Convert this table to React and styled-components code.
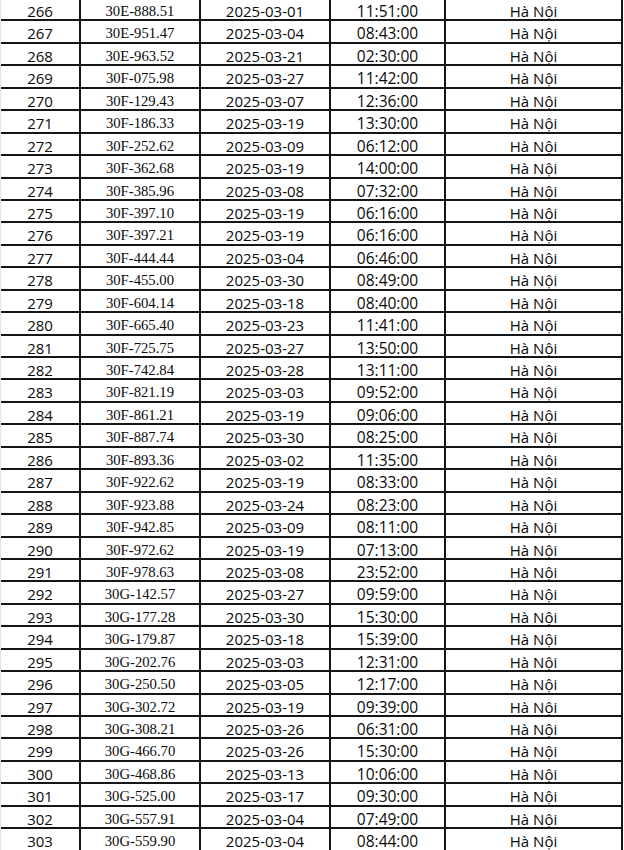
import React from 'react';
import styled, { createGlobalStyle } from 'styled-components';

const GlobalStyle = createGlobalStyle`
  html, body {
    margin: 0;
    padding: 0;
    background: #ffffff;
    overflow: hidden;
  }
`;

const rows = [
  ['266', '30E-888.51', '2025-03-01', '11:51:00'],
  ['267', '30E-951.47', '2025-03-04', '08:43:00'],
  ['268', '30E-963.52', '2025-03-21', '02:30:00'],
  ['269', '30F-075.98', '2025-03-27', '11:42:00'],
  ['270', '30F-129.43', '2025-03-07', '12:36:00'],
  ['271', '30F-186.33', '2025-03-19', '13:30:00'],
  ['272', '30F-252.62', '2025-03-09', '06:12:00'],
  ['273', '30F-362.68', '2025-03-19', '14:00:00'],
  ['274', '30F-385.96', '2025-03-08', '07:32:00'],
  ['275', '30F-397.10', '2025-03-19', '06:16:00'],
  ['276', '30F-397.21', '2025-03-19', '06:16:00'],
  ['277', '30F-444.44', '2025-03-04', '06:46:00'],
  ['278', '30F-455.00', '2025-03-30', '08:49:00'],
  ['279', '30F-604.14', '2025-03-18', '08:40:00'],
  ['280', '30F-665.40', '2025-03-23', '11:41:00'],
  ['281', '30F-725.75', '2025-03-27', '13:50:00'],
  ['282', '30F-742.84', '2025-03-28', '13:11:00'],
  ['283', '30F-821.19', '2025-03-03', '09:52:00'],
  ['284', '30F-861.21', '2025-03-19', '09:06:00'],
  ['285', '30F-887.74', '2025-03-30', '08:25:00'],
  ['286', '30F-893.36', '2025-03-02', '11:35:00'],
  ['287', '30F-922.62', '2025-03-19', '08:33:00'],
  ['288', '30F-923.88', '2025-03-24', '08:23:00'],
  ['289', '30F-942.85', '2025-03-09', '08:11:00'],
  ['290', '30F-972.62', '2025-03-19', '07:13:00'],
  ['291', '30F-978.63', '2025-03-08', '23:52:00'],
  ['292', '30G-142.57', '2025-03-27', '09:59:00'],
  ['293', '30G-177.28', '2025-03-30', '15:30:00'],
  ['294', '30G-179.87', '2025-03-18', '15:39:00'],
  ['295', '30G-202.76', '2025-03-03', '12:31:00'],
  ['296', '30G-250.50', '2025-03-05', '12:17:00'],
  ['297', '30G-302.72', '2025-03-19', '09:39:00'],
  ['298', '30G-308.21', '2025-03-26', '06:31:00'],
  ['299', '30G-466.70', '2025-03-26', '15:30:00'],
  ['300', '30G-468.86', '2025-03-13', '10:06:00'],
  ['301', '30G-525.00', '2025-03-17', '09:30:00'],
  ['302', '30G-557.91', '2025-03-04', '07:49:00'],
  ['303', '30G-559.90', '2025-03-04', '08:44:00'],
];

const Sheet = styled.div`
  width: 624px;
  height: 850px;
  overflow: hidden;
  background: #ffffff;
`;

const Table = styled.div`
  margin-top: -1px;
  border-left: 1px solid #e4e4e4;
  width: 622px;
`;

const Row = styled.div`
  display: grid;
  grid-template-columns: 80px 120px 130px 115px 177px;
  height: 22.44px;
  box-sizing: border-box;
  border-bottom: 2px solid #161616;
`;

const Cell = styled.div`
  display: flex;
  align-items: center;
  justify-content: center;
  padding-top: ${(p) => (p.$serif ? '2px' : '1px')};
  box-sizing: border-box;
  border-right: 2px solid #161616;
  color: #0a0a0a;
  white-space: nowrap;
  font-family: ${(p) => (p.$serif ? '"Liberation Serif", "Times New Roman", serif' : '"Open Sans", "Liberation Sans", sans-serif')};
  font-weight: ${(p) => (p.$serif ? 400 : 500)};
  font-size: ${(p) => p.$size || '15px'};
`;

export default function App() {
  return (
    <Sheet>
      <GlobalStyle />
      <Table>
        {rows.map(([no, plate, date, time]) => (
          <Row key={no}>
            <Cell>{no}</Cell>
            <Cell $serif $size="14.7px">{plate}</Cell>
            <Cell>{date}</Cell>
            <Cell $size="15.5px">{time}</Cell>
            <Cell>Hà Nội</Cell>
          </Row>
        ))}
      </Table>
    </Sheet>
  );
}
